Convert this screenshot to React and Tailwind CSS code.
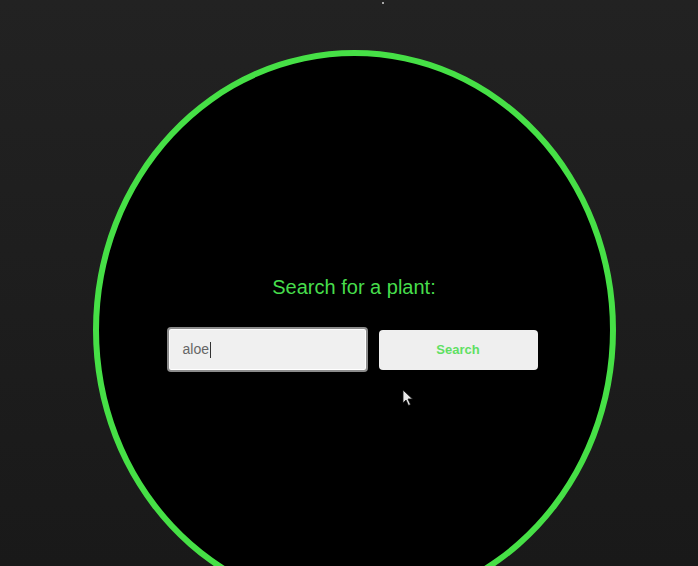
import React from 'react';

const App = () => {
    return (
        <div className="relative h-[566px] w-full overflow-hidden bg-gradient-to-b from-[#222222] to-[#191919] font-['Liberation_Sans',Arial,sans-serif]">
            {/* tiny speck at top */}
            <div className="absolute left-[382px] top-[2px] h-[2px] w-[2px] rounded-full bg-white/80" />

            <div className="flex justify-center pl-[10px] pt-[50px]">
                <div className="box-border flex h-[560px] w-[523px] shrink-0 flex-col items-center rounded-[50%] border-[6px] border-[#46e046] bg-black pt-[219px]">
                    <h2 className="text-[20px] leading-[24px] text-[#47dd4c]">Search for a plant:</h2>

                    <div className="mt-[28px] flex items-center gap-[11px] pr-[4px]">
                        <div className="flex h-[45px] w-[201px] items-center rounded-[4px] border-2 border-[#8c8c8c] bg-[#f0f0f0] pl-[14px] shadow-[inset_0_0_0_1px_#ffffff]">
                            <span className="text-[14px] text-[#666666]">aloe</span>
                            <span className="ml-[1px] h-[16px] w-[1px] bg-[#333333]" />
                        </div>
                        <button className="h-[40px] w-[159px] rounded-[4px] bg-[#efefef] text-[13px] font-bold text-[#5fe063]">
                            Search
                        </button>
                    </div>
                </div>
            </div>

            {/* mouse pointer */}
            <svg className="absolute left-[402px] top-[389px]" width="12" height="18" viewBox="0 0 12 18">
                <path d="M1 1 L1 14 L4 11 L6.5 16.5 L8.5 15.5 L6 10 L10.5 10 Z" fill="#e8e8e8" stroke="#111" strokeWidth="0.8" />
            </svg>
        </div>
    );
};

export default App;
